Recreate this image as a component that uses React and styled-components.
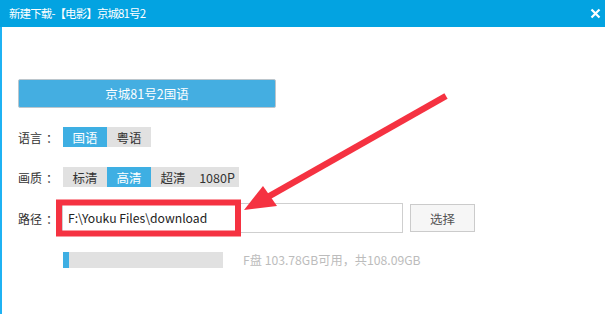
import React, { useState } from 'react';
import styled, { createGlobalStyle } from 'styled-components';

const GlobalStyle = createGlobalStyle`
  html, body {
    margin: 0;
    padding: 0;
    background: #fff;
  }
  body {
    font-family: "Noto Sans CJK SC", "Noto Sans", sans-serif;
  }
`;

const Window = styled.div`
  position: relative;
  width: 605px;
  height: 314px;
  overflow: hidden;
  background: #fff;
`;

const TitleBar = styled.div`
  height: 27px;
  background: #03a3e1;
  display: flex;
  align-items: center;
  justify-content: space-between;
  padding: 0 4px 0 9px;
  color: #fff;
  font-size: 11.5px;
  box-sizing: border-box;
`;

const Title = styled.span`
  letter-spacing: -0.9px;
  line-height: 1;
`;

const Close = styled.span`
  width: 12px;
  height: 12px;
  display: flex;
  align-items: center;
  justify-content: center;
`;

const Body = styled.div`
  height: 287px;
  border-left: 2px solid #1fb2f3;
  box-sizing: border-box;
  padding: 52px 0 0 16px;
  display: flex;
  flex-direction: column;
`;

const MainButton = styled.div`
  width: 258px;
  height: 29px;
  box-sizing: border-box;
  background: #44aee1;
  border: 1px solid #bcc6cc;
  border-radius: 2px;
  color: #fff;
  font-size: 12.5px;
  display: flex;
  align-items: center;
  justify-content: center;
`;

const Row = styled.div`
  display: flex;
  align-items: center;
  margin-top: ${p => p.gap}px;
  height: ${p => p.h}px;
`;

const Label = styled.span`
  width: 45px;
  font-size: 12px;
  color: #333;
  flex-shrink: 0;
  white-space: nowrap;
`;

const Colon = styled.span`
  margin-left: 4px;
`;

const Tabs = styled.div`
  display: flex;
  height: 20px;
`;

const Tab = styled.div`
  width: 44px;
  height: 20px;
  display: flex;
  align-items: center;
  justify-content: center;
  font-size: 12.5px;
  background: ${p => (p.active ? '#3eafe3' : '#e1e1e1')};
  color: ${p => (p.active ? '#fff' : '#333')};
  cursor: pointer;
`;

const PathInput = styled.div`
  width: 341px;
  height: 30px;
  margin-left: -1px;
  box-sizing: border-box;
  border: 1px solid #cfcfcf;
  display: flex;
  align-items: center;
  padding-left: 5px;
  font-size: 12.2px;
  color: #222;
`;

const PickButton = styled.div`
  width: 65px;
  height: 28px;
  margin-left: 7px;
  box-sizing: border-box;
  border: 1px solid #cbcbcb;
  background: #f6f6f6;
  color: #555;
  font-size: 12.5px;
  display: flex;
  align-items: center;
  justify-content: center;
`;

const Progress = styled.div`
  width: 160px;
  height: 16px;
  background: #e1e1e1;
  flex-shrink: 0;
`;

const Fill = styled.div`
  height: 100%;
  background: #3eafe3;
`;

const DiskInfo = styled.span`
  margin-left: 20px;
  font-size: 12.2px;
  color: #bcbcbc;
`;

const Overlay = styled.svg`
  position: absolute;
  left: 0;
  top: 0;
  pointer-events: none;
`;

function FieldLabel({ text }) {
  return (
    <Label>
      {text}
      <Colon>：</Colon>
    </Label>
  );
}

export default function App() {
  const [lang, setLang] = useState('国语');
  const [quality, setQuality] = useState('高清');
  const used = 6 / 160;

  return (
    <Window>
      <GlobalStyle />
      <TitleBar>
        <Title>新建下载-【电影】京城81号2</Title>
        <Close>
          <svg width="11" height="11" viewBox="0 0 11 11">
            <path d="M1.5 1.5 L9.5 9.5 M9.5 1.5 L1.5 9.5" stroke="#fff" strokeWidth="2.2" />
          </svg>
        </Close>
      </TitleBar>
      <Body>
        <MainButton>京城81号2国语</MainButton>
        <Row gap={19} h={20}>
          <FieldLabel text="语言" />
          <Tabs>
            {['国语', '粤语'].map(t => (
              <Tab key={t} active={lang === t} onClick={() => setLang(t)}>{t}</Tab>
            ))}
          </Tabs>
        </Row>
        <Row gap={20} h={20}>
          <FieldLabel text="画质" />
          <Tabs>
            {['标清', '高清', '超清', '1080P'].map(t => (
              <Tab key={t} active={quality === t} onClick={() => setQuality(t)}>{t}</Tab>
            ))}
          </Tabs>
        </Row>
        <Row gap={16} h={30}>
          <FieldLabel text="路径" />
          <PathInput>F:\Youku Files\download</PathInput>
          <PickButton>选择</PickButton>
        </Row>
        <Row gap={19} h={16}>
          <Label />
          <Progress>
            <Fill style={{ width: `${used * 100}%` }} />
          </Progress>
          <DiskInfo>F盘 103.78GB可用，共108.09GB</DiskInfo>
        </Row>
      </Body>
      <Overlay width="605" height="314" viewBox="0 0 605 314">
        <rect x="59" y="202.5" width="179" height="31" fill="none" stroke="#f53241" strokeWidth="6" />
        <line x1="446" y1="96" x2="266" y2="198" stroke="#f53241" strokeWidth="6.5" />
        <polygon points="244,210 263,186 277,206" fill="#f53241" />
      </Overlay>
    </Window>
  );
}
